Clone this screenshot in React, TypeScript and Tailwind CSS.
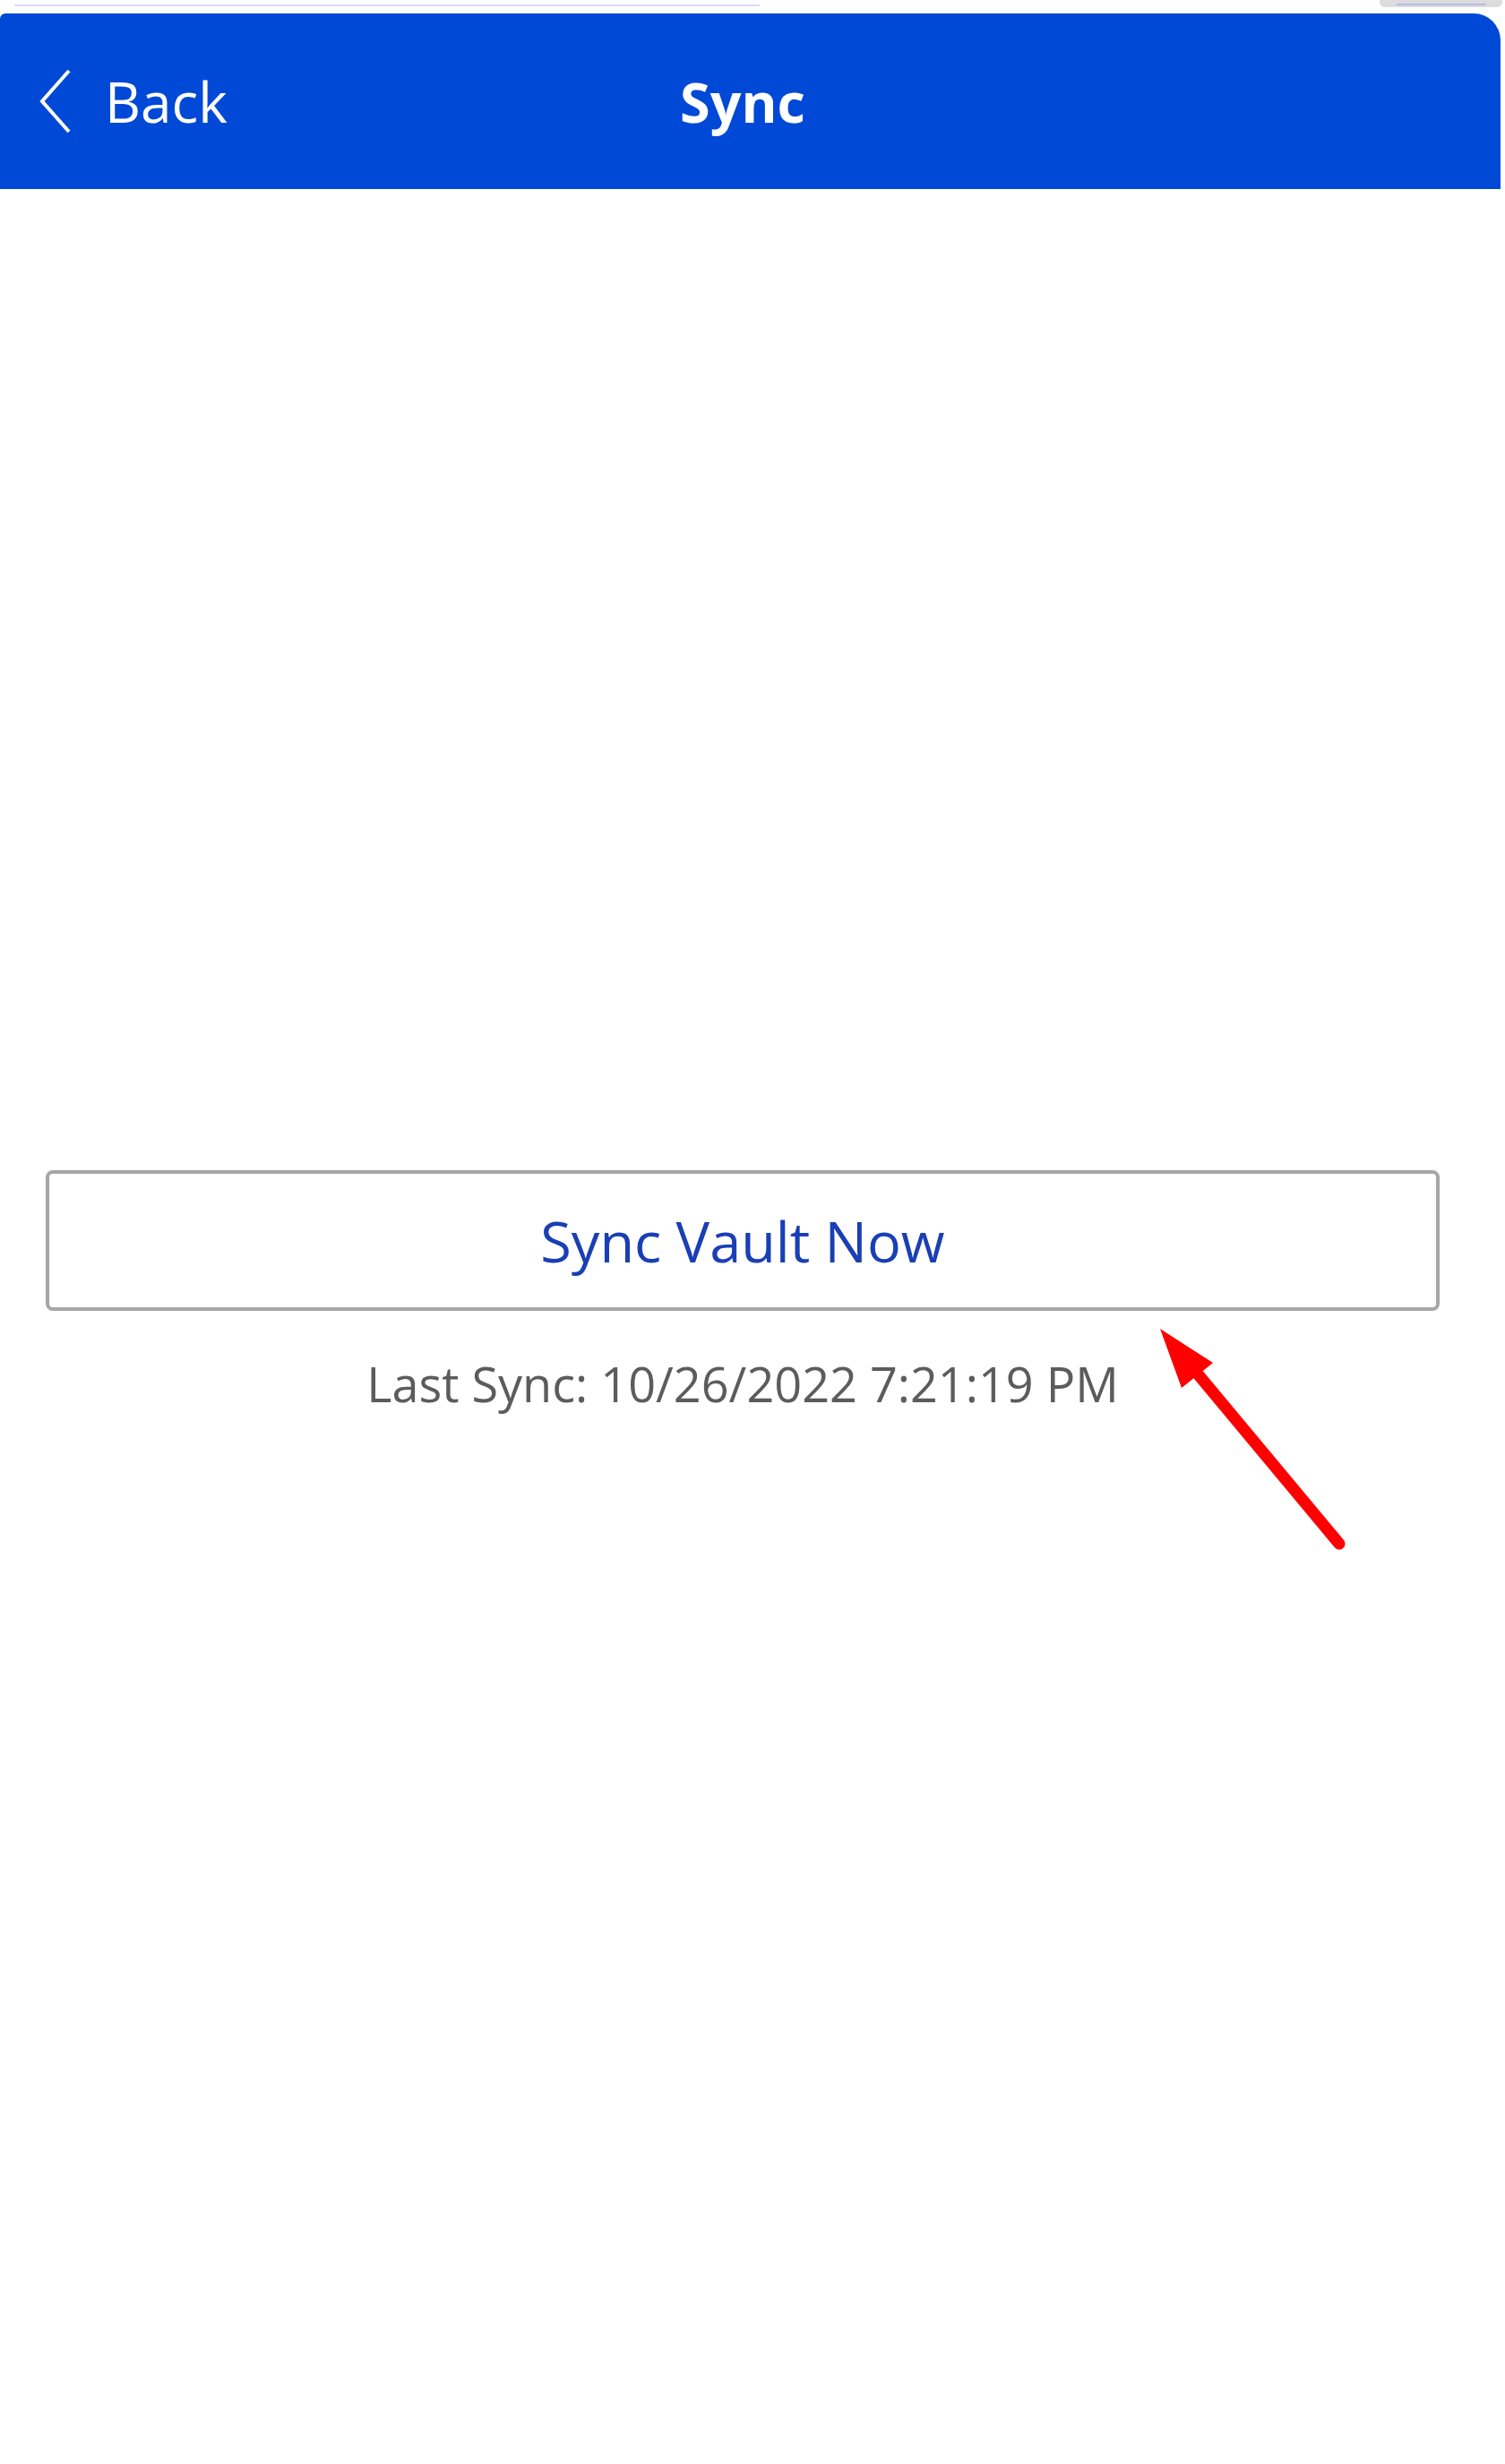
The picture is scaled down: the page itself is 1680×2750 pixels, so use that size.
export default function App() {
  return (
    <div className="relative h-[2750px] w-[1680px] bg-white font-['Open_Sans',sans-serif]">
      {/* Top strip (scroll indicators) */}
      <div className="flex h-[15px] items-start">
        <div className="ml-[16px] mt-[5px] h-[2px] w-[832px] bg-[#dcdaff]" />
        <div className="ml-auto mr-[3px] flex h-[8px] w-[137px] items-end justify-center rounded-b-[6px] bg-[#dcdcdc] pb-[2px]">
          <div className="h-[2px] w-[100px] bg-[#b9b9e6]" />
        </div>
      </div>

      {/* Header */}
      <div className="grid h-[196px] w-[1675px] grid-cols-[1fr_auto_1fr] items-center rounded-tl-[6px] rounded-tr-[30px] bg-[#0049d7] pr-[17px] text-white">
        <div className="flex items-center">
          <svg className="ml-[44px] h-[72px] w-[36px]" viewBox="0 0 36 72" fill="none">
            <polyline points="33,2 3,36 33,70" stroke="white" strokeWidth="4" strokeLinejoin="miter" />
          </svg>
          <span className="ml-[37px] text-[62px] leading-none">Back</span>
        </div>
        <div className="text-[61px] font-bold leading-none">Sync</div>
        <div />
      </div>

      {/* Content */}
      <div className="pl-[51px] pr-[73px] pt-[1095px]">
        <button className="flex h-[157px] w-full items-center justify-center rounded-[8px] border-[4px] border-[#a6a6a6] bg-white text-[63px] leading-none text-[#1a3fb5]">
          Sync Vault Now
        </button>
        <p className="mt-[54px] text-center text-[54px] leading-none text-[#5c5c5c]">
          Last Sync: 10/26/2022 7:21:19 PM
        </p>
      </div>

      {/* Annotation arrow */}
      <svg className="absolute left-[1270px] top-[1460px] h-[290px] w-[250px]" viewBox="1270 1460 250 290">
        <line x1="1495" y1="1723" x2="1330" y2="1525" stroke="#ff0000" strokeWidth="13" strokeLinecap="round" />
        <polygon points="1295,1483 1354,1521 1319,1549" fill="#ff0000" />
      </svg>
    </div>
  );
}
